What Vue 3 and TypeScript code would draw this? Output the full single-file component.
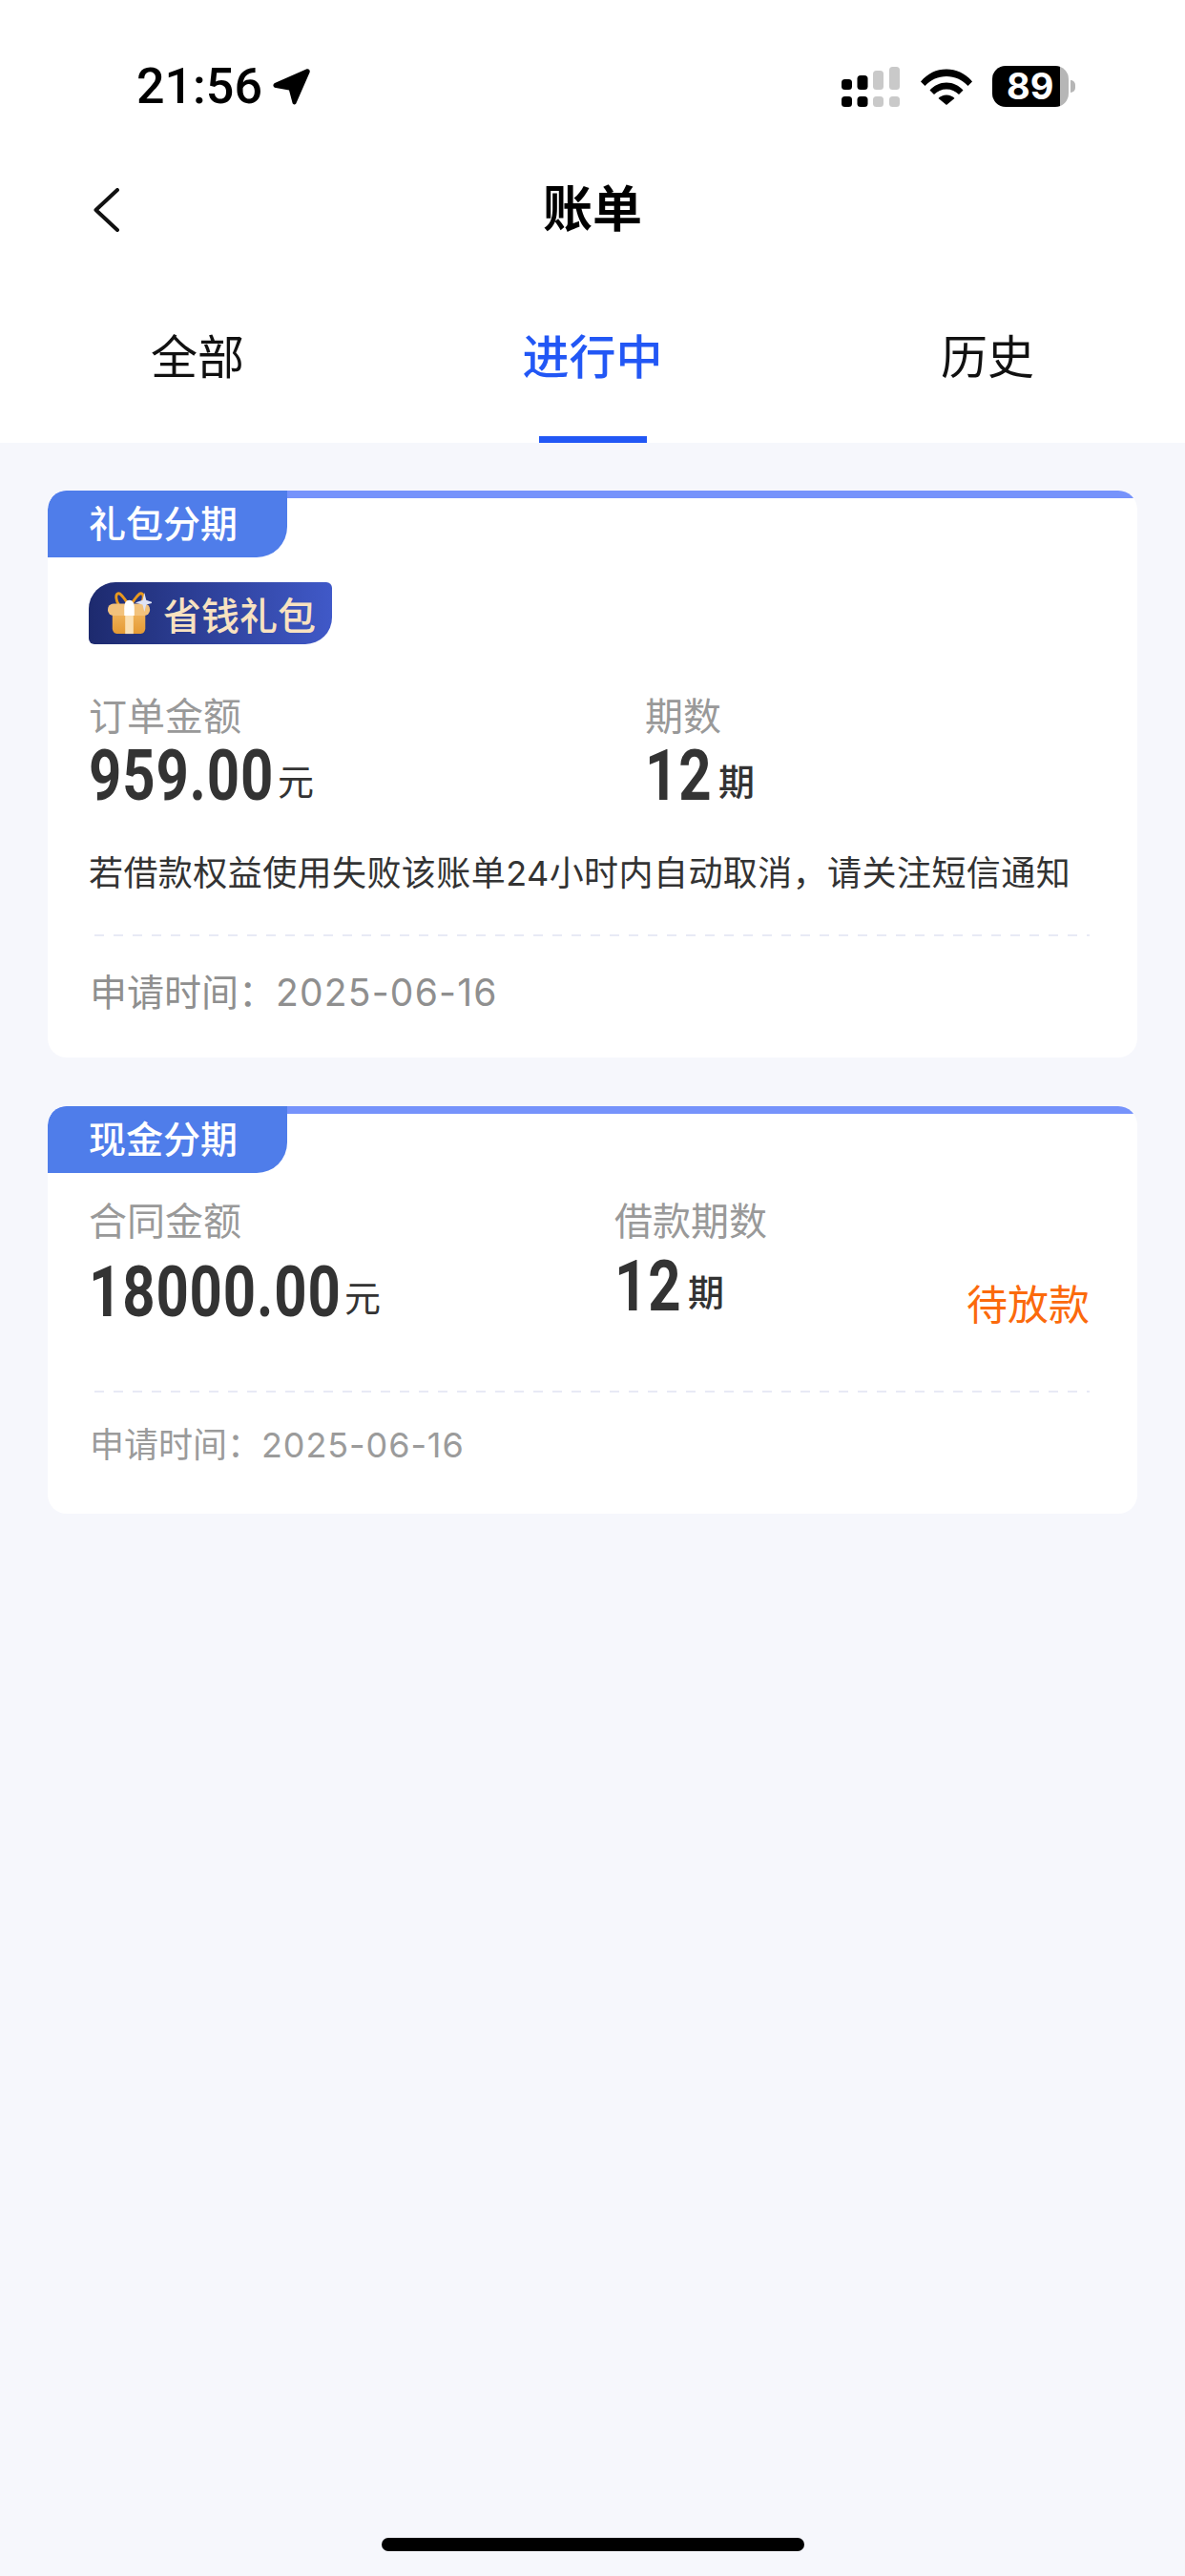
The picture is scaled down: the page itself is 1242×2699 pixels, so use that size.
<template>
  <div class="page">
    <div class="status">
      <div class="status__left">
        <span class="status__time">21:56</span>
        <svg class="status__loc" viewBox="0 0 40 40" aria-hidden="true">
          <path d="M2 16 35 1.500c2.500-1 4.500 1 3.500 3.500L24.500 37c-.8 2-3.500 2-4-.2L17 23.500 3 21C0 20.500-.5 17.500 2 16z" />
        </svg>
      </div>
      <div class="status__right">
        <svg class="status__signal" viewBox="0 0 62 42" aria-hidden="true">
          <rect x="0" y="13" width="11" height="11" rx="3.5" />
          <rect x="16.5" y="9" width="11" height="15" rx="3.5" />
          <rect class="off" x="33" y="4" width="11" height="20" rx="3.5" />
          <rect class="off" x="50" y="0" width="11" height="24" rx="3.5" />
          <rect x="0" y="31" width="11" height="11" rx="3.5" />
          <rect x="16.5" y="31" width="11" height="11" rx="3.5" />
          <rect class="off" x="33" y="31" width="11" height="11" rx="3.5" />
          <rect class="off" x="50" y="31" width="11" height="11" rx="3.5" />
        </svg>
        <svg class="status__wifi" viewBox="0 0 54 38" aria-hidden="true">
          <path d="M0 13.5C7 5 16.500 .5 27 .5S47 5 54 13.500l-4.500 4.500C43.500 11.500 35.500 8 27 8S10.500 11.500 4.500 18z" />
          <path d="M9.500 22.500C14 17.500 20 14.500 27 14.500s13 3 17.500 8L40 27c-3.500-3.500-8-5.500-13-5.500S17.500 23.500 14 27z" />
          <path d="M18.500 31c2.200-2.300 5.200-3.500 8.500-3.500s6.300 1.200 8.500 3.500L27 38z" />
        </svg>
        <div class="battery">
          <div class="battery__body"><span class="battery__text">89</span></div>
          <div class="battery__nub"></div>
        </div>
      </div>
    </div>

    <div class="nav">
      <svg class="nav__back" viewBox="0 0 27 46" aria-hidden="true">
        <path d="M25 2 2.500 23 25 44" />
      </svg>
      <div class="nav__title">账单</div>
    </div>

    <div class="tabs">
      <div
        v-for="t in tabs"
        :key="t"
        class="tab"
        :class="{ 'tab--active': t === activeTab }"
      >
        <span class="tab__label">{{ t }}</span>
        <span v-if="t === activeTab" class="tab__bar"></span>
      </div>
    </div>

    <div class="list">
      <div v-for="b in bills" :key="b.tag" class="card" :class="`card--${b.kind}`">
        <div class="card__tag">{{ b.tag }}</div>
        <div class="card__body">
          <div v-if="b.gift" class="gift">
            <svg class="gift__icon" viewBox="0 0 48 48" aria-hidden="true">
              <defs>
                <linearGradient id="giftBox" x1="0" y1="0" x2="0" y2="1">
                  <stop offset="0" stop-color="#f0b45c" />
                  <stop offset="1" stop-color="#e59a34" />
                </linearGradient>
              </defs>
              <path d="M22 13C17 6 14 1 11 2 8 3 9 10 12 14M26 13c5-7 8-12 11-11 3 1 2 8-1 12" fill="none" stroke="#e8991f" stroke-width="3" />
              <path d="M5 22h36v18c0 3-2 6-5 6H10c-3 0-5-3-5-6z" fill="url(#giftBox)" />
              <rect x="0" y="13" width="46" height="13" rx="6" fill="#f2c27c" />
              <rect x="19" y="26" width="9" height="20" fill="#fbe0b2" />
              <path d="M18 18c0-6 2-9 5.500-9S29 12 29 18v8H18z" fill="#fff" />
              <path d="M40 1 42 9 50 12 42 14 40 22 38 14 30 12 38 9z" fill="#dfe3f5" />
            </svg>
            <span class="gift__text">省钱礼包</span>
          </div>

          <div class="row">
            <div class="col">
              <div class="col__label">{{ b.amountLabel }}</div>
              <div class="val">
                <span class="val__num" :style="{ width: numWidth(b.amount) }">{{ b.amount }}</span>
                <span class="val__unit">元</span>
              </div>
            </div>
            <div class="col">
              <div class="col__label">{{ b.termLabel }}</div>
              <div class="val val--term">
                <span class="val__num" :style="{ width: numWidth('12') }">12</span>
                <span class="val__unit val__unit--term">期</span>
              </div>
            </div>
            <div v-if="b.status" class="row__status">{{ b.status }}</div>
          </div>

          <div v-if="b.note" class="note">{{ b.note }}</div>
          <div class="dash"></div>
          <div class="date">申请时间：<span class="date__val">{{ b.date }}</span></div>
        </div>
      </div>
    </div>

    <div class="home"></div>
  </div>
</template>

<script setup lang="ts">
interface Bill {
  kind: string;
  tag: string;
  gift?: boolean;
  amountLabel: string;
  amount: string;
  termLabel: string;
  status?: string;
  note?: string;
  date: string;
}

const tabs = ['全部', '进行中', '历史'];
const activeTab = '进行中';

const bills: Bill[] = [
  {
    kind: 'gift',
    tag: '礼包分期',
    gift: true,
    amountLabel: '订单金额',
    amount: '959.00',
    termLabel: '期数',
    note: '若借款权益使用失败该账单24小时内自动取消，请关注短信通知',
    date: '2025-06-16',
  },
  {
    kind: 'cash',
    tag: '现金分期',
    amountLabel: '合同金额',
    amount: '18000.00',
    termLabel: '借款期数',
    status: '待放款',
    date: '2025-06-16',
  },
];

// numbers are squeezed with scaleX, so the box needs the squeezed width
function numWidth(s: string) {
  const dots = s.split('.').length - 1;
  return `${(s.length - dots) * 35 + dots * 16 + 7}px`;
}
</script>

<style scoped>
.page {
  display: flex;
  flex-direction: column;
  min-height: 2699px;
  background: #f6f7fc;
  font-family: Inter, "Noto Sans CJK SC", sans-serif;
}

/* status bar */
.status {
  display: flex;
  justify-content: space-between;
  height: 43px;
  padding: 69px 115px 0 143px;
  background: #fff;
}
.status__left {
  display: flex;
  align-items: center;
  gap: 11px;
}
.status__time {
  font-family: Roboto, sans-serif;
  font-size: 52px;
  font-weight: 500;
  line-height: 43px;
  color: #000;
}
.status__loc {
  width: 40px;
  height: 40px;
  fill: #000;
}
.status__right {
  display: flex;
  align-items: flex-start;
  gap: 21px;
}
.status__signal {
  width: 62px;
  height: 42px;
  margin-top: 1px;
  fill: #000;
}
.status__signal .off {
  fill: #c9c9c9;
}
.status__wifi {
  width: 54px;
  height: 38px;
  margin-top: 3px;
  fill: #000;
}
.battery {
  display: flex;
  align-items: center;
  gap: 2px;
}
.battery__body {
  display: flex;
  align-items: center;
  justify-content: flex-start;
  width: 80px;
  height: 43px;
  padding-left: 15px;
  box-sizing: border-box;
  border-radius: 14px;
  background: linear-gradient(90deg, #000 71px, #b6b6b6 71px);
}
.battery__text {
  font-family: Inter, sans-serif;
  font-size: 38px;
  font-weight: 700;
  line-height: 43px;
  color: #fff;
}
.battery__nub {
  width: 5px;
  height: 13px;
  border-radius: 0 6px 6px 0;
  background: #b6b6b6;
}

/* nav */
.nav {
  display: grid;
  grid-template-columns: 1fr auto 1fr;
  align-items: center;
  height: 98px;
  padding-top: 59px;
  background: #fff;
}
.nav__back {
  width: 27px;
  height: 46px;
  margin-left: 98px;
  fill: none;
  stroke: #111;
  stroke-width: 4;
  stroke-linecap: round;
  stroke-linejoin: round;
}
.nav__title {
  font-size: 52px;
  font-weight: 700;
  line-height: 60px;
  color: #000;
}

/* tabs */
.tabs {
  display: grid;
  grid-template-columns: repeat(3, 1fr);
  height: 195px;
  background: #fff;
}
.tab {
  display: flex;
  flex-direction: column;
  align-items: center;
  padding-top: 76px;
}
.tab__label {
  font-size: 49px;
  line-height: 60px;
  color: #111;
}
.tab--active .tab__label {
  font-weight: 500;
  color: #2257f5;
}
.tab__bar {
  width: 113px;
  height: 7px;
  margin-top: 52px;
  background: #2257f5;
}

/* cards */
.list {
  display: flex;
  flex-direction: column;
  gap: 51px;
  padding: 50px 50px 0;
}
.card {
  border-radius: 20px;
  overflow: hidden;
  background: linear-gradient(#7693fb 8px, #fff 8px);
}
.card__tag {
  width: 208px;
  height: 70px;
  padding-left: 43px;
  border-radius: 20px 0 32px 0;
  background: #4f7dea;
  font-size: 39px;
  font-weight: 500;
  line-height: 70px;
  color: #fff;
}
.card__body {
  padding: 0 50px 43px 43px;
}
.gift {
  display: flex;
  align-items: center;
  gap: 12px;
  width: 255px;
  height: 65px;
  margin-top: 26px;
  padding-left: 20px;
  box-sizing: border-box;
  border-radius: 28px 6px 28px 6px;
  background: linear-gradient(90deg, #1d2a6e, #4059c8);
}
.gift__icon {
  width: 46px;
  height: 46px;
  flex-shrink: 0;
}
.gift__text {
  font-size: 40px;
  font-weight: 500;
  color: #f8e2c0;
  white-space: nowrap;
}
.row {
  display: grid;
  grid-template-columns: 583px 1fr;
  margin-top: 52px;
}
.col__label {
  font-size: 40px;
  line-height: 48px;
  color: #999;
}
.val {
  display: flex;
  align-items: flex-end;
  height: 60px;
  margin-top: 8px;
}
.val__num {
  display: inline-block;
  flex-shrink: 0;
  font-family: Roboto, sans-serif;
  font-size: 74px;
  font-weight: 700;
  line-height: 60px;
  letter-spacing: 1px;
  color: #333;
  white-space: nowrap;
  transform: scaleX(0.81);
  transform-origin: left center;
}
.val__unit {
  font-size: 38px;
  line-height: 48px;
  color: #333;
  white-space: nowrap;
}
.val__unit--term {
  font-weight: 500;
}
.note {
  margin-top: 48px;
  font-size: 36px;
  line-height: 48px;
  letter-spacing: 0.43px;
  color: #333;
  white-space: nowrap;
}
.dash {
  height: 2px;
  margin: 40px 0 0 6px;
  background: repeating-linear-gradient(90deg, #e8eaf5 0 10px, transparent 10px 20px);
}
.date {
  margin: 34px 0 0 1px;
  font-size: 39px;
  line-height: 50px;
  color: #8f8f8f;
}
.date__val {
  letter-spacing: 1.2px;
}

/* second card differs a bit */
.card--cash .row {
  grid-template-columns: 551px 1fr auto;
  margin-top: 27px;
}
.card--cash .val {
  margin-top: 20px;
}
.card--cash .col + .col .val {
  margin-top: 14px;
}
.row__status {
  align-self: end;
  margin-bottom: -3px;
  font-size: 43px;
  line-height: 40px;
  white-space: nowrap;
  color: #fb6a0c;
}
.card--cash .dash {
  margin-top: 73px;
}
.card--cash .date {
  margin-top: 30px;
  font-size: 36px;
  color: #9b9b9b;
}
.card--cash .date__val {
  letter-spacing: 0.9px;
}
.card--cash .card__body {
  padding-bottom: 47px;
}

.home {
  width: 443px;
  height: 14px;
  margin: auto auto 26px;
  border-radius: 7px;
  background: #000;
}
</style>

<style>
body {
  background: #f6f7fc;
}
</style>
